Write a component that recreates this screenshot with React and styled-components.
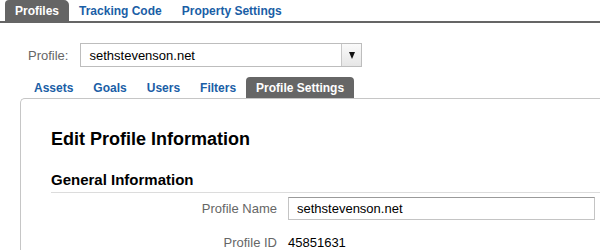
import React from "react";
import styled, { createGlobalStyle } from "styled-components";

const GlobalStyle = createGlobalStyle`
  body {
    margin: 0;
    background: #fff;
    font-family: "Liberation Sans", Arial, sans-serif;
    overflow: hidden;
  }
`;

const TopNav = styled.nav`
  display: flex;
  height: 21px;
  padding-left: 5px;
  border-bottom: 2px solid #656565;
`;

const TopTab = styled.a`
  display: flex;
  align-items: center;
  padding: 0 10px;
  font-size: 12px;
  font-weight: bold;
  text-decoration: none;
  border-radius: 4px 5px 0 0;
  color: ${(p) => (p.active ? "#fff" : "#1a5ea6")};
  background: ${(p) => (p.active ? "#656565" : "transparent")};
`;

const Main = styled.div`
  padding-left: 20px;
`;

const ProfileRow = styled.div`
  display: flex;
  align-items: center;
  gap: 12px;
  margin-top: 20px;
  padding-left: 8px;
`;

const Label = styled.span`
  font-size: 13px;
  color: #666;
`;

const Select = styled.div`
  display: flex;
  width: 282px;
  height: 24px;
  box-sizing: border-box;
  border: 1px solid #bdbdbd;
`;

const SelectValue = styled.div`
  flex: 1;
  display: flex;
  align-items: center;
  padding-left: 8px;
  font-size: 13px;
  color: #000;
`;

const SelectButton = styled.div`
  width: 19px;
  display: flex;
  align-items: center;
  justify-content: center;
  border-left: 1px solid #c8c8c8;
  background: linear-gradient(#fafafa, #e6e6e6);
`;

const Arrow = styled.span`
  width: 0;
  height: 0;
  border-left: 3.5px solid transparent;
  border-right: 3.5px solid transparent;
  border-top: 7px solid #111;
`;

const SubTabs = styled.div`
  display: flex;
  height: 21px;
  margin-top: 10px;
  padding-left: 4px;
`;

const SubTab = styled.a`
  display: flex;
  align-items: center;
  padding: 0 10px;
  font-size: 12px;
  font-weight: bold;
  text-decoration: none;
  border-radius: 4px 4px 0 0;
  color: ${(p) => (p.active ? "#fff" : "#1a5ea6")};
  background: ${(p) => (p.active ? "#666" : "transparent")};
`;

const Panel = styled.section`
  border-top: 1px solid #c6c6c6;
  border-left: 1px solid #c6c6c6;
  border-top-left-radius: 5px;
  padding: 29px 0 0 30px;
`;

const Heading = styled.h2`
  margin: 0 0 21px;
  font-size: 18px;
  line-height: 22px;
  font-weight: bold;
  color: #000;
`;

const SectionTitle = styled.h3`
  margin: 0;
  padding-bottom: 3px;
  font-size: 15px;
  line-height: 18px;
  font-weight: bold;
  color: #000;
  border-bottom: 1px solid #dcdcdc;
`;

const Form = styled.div`
  display: grid;
  grid-template-columns: 226px 307px;
  column-gap: 11px;
  row-gap: 16px;
  align-items: center;
  margin-top: 4px;
`;

const FieldLabel = styled.span`
  text-align: right;
  font-size: 13px;
  line-height: 14px;
  color: #666;
`;

const TextInput = styled.div`
  height: 23px;
  box-sizing: border-box;
  display: flex;
  align-items: center;
  padding-left: 8px;
  font-size: 13px;
  color: #000;
  border: 1px solid #c4c4c4;
  border-top-color: #9a9a9a;
`;

const Value = styled.span`
  font-size: 13px;
  line-height: 14px;
  color: #000;
`;

export default function App() {
  return (
    <>
      <GlobalStyle />
      <TopNav>
        <TopTab active>Profiles</TopTab>
        <TopTab>Tracking Code</TopTab>
        <TopTab>Property Settings</TopTab>
      </TopNav>
      <Main>
        <ProfileRow>
          <Label>Profile:</Label>
          <Select>
            <SelectValue>sethstevenson.net</SelectValue>
            <SelectButton>
              <Arrow />
            </SelectButton>
          </Select>
        </ProfileRow>
        <SubTabs>
          <SubTab>Assets</SubTab>
          <SubTab>Goals</SubTab>
          <SubTab>Users</SubTab>
          <SubTab>Filters</SubTab>
          <SubTab active>Profile Settings</SubTab>
        </SubTabs>
        <Panel>
          <Heading>Edit Profile Information</Heading>
          <SectionTitle>General Information</SectionTitle>
          <Form>
            <FieldLabel>Profile Name</FieldLabel>
            <TextInput>sethstevenson.net</TextInput>
            <FieldLabel>Profile ID</FieldLabel>
            <Value>45851631</Value>
          </Form>
        </Panel>
      </Main>
    </>
  );
}
